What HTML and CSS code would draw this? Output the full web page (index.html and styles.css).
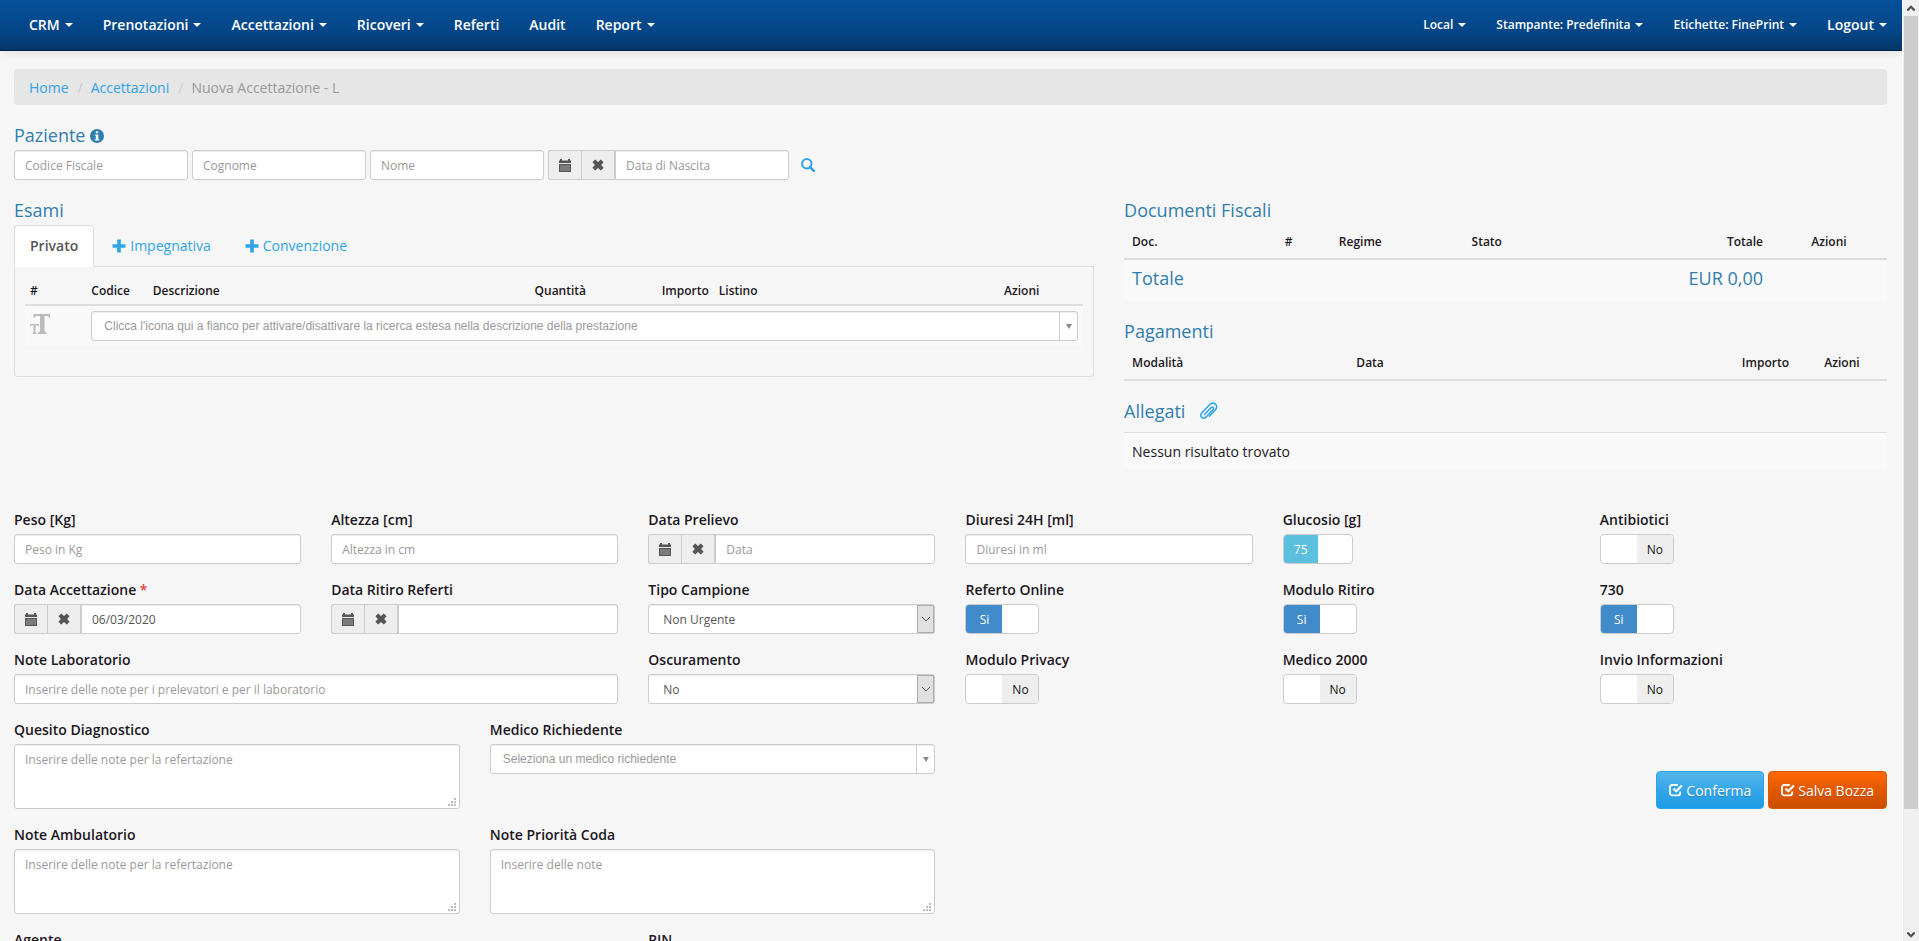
FILE: index.html
```html
<!DOCTYPE html>
<html lang="it">
<head>
<meta charset="utf-8">
<title>Nuova Accettazione</title>
<link rel="stylesheet" href="styles.css">
</head>
<body>
<svg class="sprite" aria-hidden="true">
  <symbol id="i-cal" viewBox="0 0 12 13"><path fill-rule="evenodd" d="M0 1.500h1V0h2v1.500h6V0h2v1.500h1V4H0zM0 5h12v8H0zM1.500 6.500v1h1v-1zm2 0v1h1v-1zm2 0v1h1v-1zm2 0v1h1v-1zm2 0v1h1v-1zm-8 2v1h1v-1zm2 0v1h1v-1zm2 0v1h1v-1zm2 0v1h1v-1zm2 0v1h1v-1zm-8 2v1h1v-1zm2 0v1h1v-1zm2 0v1h1v-1zm2 0v1h1v-1zm2 0v1h1v-1z"/></symbol>
  <symbol id="i-x" viewBox="0 0 12 12"><path d="M3.200.4 6 2.900 8.800.4l2.800 2.800L9.100 6l2.500 2.800-2.800 2.800L6 9.100l-2.800 2.500L.4 8.800 2.900 6 .4 3.200z"/></symbol>
  <symbol id="i-info" viewBox="0 0 14 14"><path fill-rule="evenodd" d="M7 0a7 7 0 1 1 0 14A7 7 0 0 1 7 0zM5.800 2.300v2h2.400v-2zM4.800 5.500v1h1v3.700h-1v1.200h4.500v-1.200h-1V5.500z"/></symbol>
  <symbol id="i-search" viewBox="0 0 14 14"><circle cx="5.800" cy="5.800" r="4.700" fill="none" stroke="currentColor" stroke-width="2"/><path d="M9 9l3.800 3.800" stroke="currentColor" stroke-width="2.600" stroke-linecap="round"/></symbol>
  <symbol id="i-plus" viewBox="0 0 14 14"><path d="M5.200.5h3.600v4.700h4.700v3.600H8.800v4.700H5.200V8.800H.5V5.200h4.700z"/></symbol>
  <symbol id="i-size" viewBox="0 0 20 20"><path d="M3.500 0H20v4h-.9c-.3-1.400-.8-2-2.200-2h-2.400v14.500c0 1.400.5 1.900 2 2V20H8v-1.500c1.500-.1 2-.6 2-2V2H7.300C5.500 2 4.700 2.600 4.400 4h-.9zM0 10h9v2.500h-.6c-.2-.9-.5-1.300-1.300-1.300H5.500v6.800c0 .8.300 1 1.200 1.100v.9H2.300v-.9c.9-.1 1.200-.3 1.200-1.100v-6.800H1.900c-.8 0-1.100.4-1.300 1.300H0z"/></symbol>
  <symbol id="i-clip" viewBox="0 0 20 18"><path d="M5.500 12.600 12 5.700c1.600-1.600 3.600.1 2.100 1.800l-6.900 7.400c-3 3-7.400-.3-4.500-3.800l7.900-8.400c3.900-3.800 9.600.6 5.900 5L10.300 14.300" fill="none" stroke="currentColor" stroke-width="1.500" stroke-linecap="round"/></symbol>
  <symbol id="i-check" viewBox="0 0 15 14"><path d="M9.500 1.700H3.400A2.400 2.400 0 0 0 1 4.100v6.200a2.400 2.400 0 0 0 2.400 2.400h6.200A2.400 2.400 0 0 0 12 10.300V8.500" fill="none" stroke="currentColor" stroke-width="2"/><path d="M4 6.200l1.700-1.700 2.100 2.100L13 1.300 14.700 3 7.800 9.900z"/></symbol>
  <symbol id="i-up" viewBox="0 0 9 6"><path d="M0 4.500 4.500 0 9 4.500V6H7L4.500 3.300 2 6H0z"/></symbol>
</svg>

<div class="app">
  <nav class="navbar">
    <div class="menu">
      <a href="#">CRM<i class="caret"></i></a>
      <a href="#">Prenotazioni<i class="caret"></i></a>
      <a href="#">Accettazioni<i class="caret"></i></a>
      <a href="#">Ricoveri<i class="caret"></i></a>
      <a href="#">Referti</a>
      <a href="#">Audit</a>
      <a href="#">Report<i class="caret"></i></a>
    </div>
    <div class="menu">
      <a href="#" class="small">Local<i class="caret"></i></a>
      <a href="#" class="small">Stampante: Predefinita<i class="caret"></i></a>
      <a href="#" class="small">Etichette: FinePrint<i class="caret"></i></a>
      <a href="#">Logout<i class="caret"></i></a>
    </div>
  </nav>

  <main class="page">
    <ol class="breadcrumb">
      <li><a href="#">Home</a></li>
      <li><a href="#">Accettazioni</a></li>
      <li>Nuova Accettazione - L</li>
    </ol>

    <section class="patient">
      <h4>Paziente <svg class="ic14"><use href="#i-info"/></svg></h4>
      <div class="patient-row">
        <input class="control" aria-label="Codice Fiscale" placeholder="Codice Fiscale">
        <input class="control" aria-label="Cognome" placeholder="Cognome">
        <input class="control" aria-label="Nome" placeholder="Nome">
        <div class="group">
          <button type="button" class="addon" aria-label="Calendario"><svg class="cal"><use href="#i-cal"/></svg></button>
          <button type="button" class="addon" aria-label="Cancella"><svg class="ic12"><use href="#i-x"/></svg></button>
          <input class="control" aria-label="Data di Nascita" placeholder="Data di Nascita">
        </div>
        <a href="#" class="search" aria-label="Cerca"><svg class="ic14"><use href="#i-search"/></svg></a>
      </div>
    </section>

    <div class="grid top">
      <section class="exams">
        <h4>Esami</h4>
        <div class="tabs">
          <a href="#" class="tab active">Privato</a>
          <a href="#" class="tab"><svg class="ic14"><use href="#i-plus"/></svg>Impegnativa</a>
          <a href="#" class="tab"><svg class="ic14"><use href="#i-plus"/></svg>Convenzione</a>
        </div>
        <div class="panel">
          <table class="table dense">
            <colgroup><col class="e-num"><col class="e-num"><col class="e-desc"><col class="e-qty"><col class="e-amount"><col class="e-list"><col></colgroup>
            <thead><tr><th>#</th><th>Codice</th><th>Descrizione</th><th class="right">Quantità</th><th class="right">Importo</th><th>Listino</th><th class="center">Azioni</th></tr></thead>
            <tbody><tr>
              <td><button type="button" class="size" aria-label="Ricerca estesa"><svg class="ic20"><use href="#i-size"/></svg></button></td>
              <td colspan="6"><div class="combo"><input aria-label="Prestazione" placeholder="Clicca l'icona qui a fianco per attivare/disattivare la ricerca estesa nella descrizione della prestazione"><button type="button" aria-label="Apri elenco"><i></i></button></div></td>
            </tr></tbody>
          </table>
        </div>
      </section>

      <section class="docs">
        <div class="block">
          <h4>Documenti Fiscali</h4>
          <table class="table">
            <colgroup><col class="d-doc"><col class="d-num"><col class="d-regime"><col class="d-doc"><col><col class="d-act"></colgroup>
            <thead><tr><th>Doc.</th><th>#</th><th>Regime</th><th>Stato</th><th class="right">Totale</th><th class="center">Azioni</th></tr></thead>
            <tbody><tr><td colspan="4"><h4>Totale</h4></td><td class="right"><h4>EUR 0,00</h4></td><td></td></tr></tbody>
          </table>
        </div>
        <div class="block">
          <h4>Pagamenti</h4>
          <table class="table">
            <colgroup><col class="p-mode"><col><col><col class="p-act"></colgroup>
            <thead><tr><th>Modalità</th><th>Data</th><th class="right">Importo</th><th class="center">Azioni</th></tr></thead>
          </table>
        </div>
        <div class="block">
          <h4 class="attach">Allegati <a href="#" aria-label="Allega file"><svg class="clip"><use href="#i-clip"/></svg></a></h4>
          <table class="table files"><tbody><tr><td>Nessun risultato trovato</td></tr></tbody></table>
        </div>
      </section>
    </div>

    <form class="grid">
      <div class="field"><label for="peso">Peso [Kg]</label><input id="peso" class="control" placeholder="Peso in Kg"></div>
      <div class="field"><label for="altezza">Altezza [cm]</label><input id="altezza" class="control" placeholder="Altezza in cm"></div>
      <div class="field"><label for="prelievo">Data Prelievo</label>
        <div class="group">
          <button type="button" class="addon" aria-label="Calendario"><svg class="cal"><use href="#i-cal"/></svg></button>
          <button type="button" class="addon" aria-label="Cancella"><svg class="ic12"><use href="#i-x"/></svg></button>
          <input id="prelievo" class="control" placeholder="Data">
        </div></div>
      <div class="field"><label for="diuresi">Diuresi 24H [ml]</label><input id="diuresi" class="control" placeholder="Diuresi in ml"></div>
      <div class="field"><label for="glucosio">Glucosio [g]</label><div class="switch info narrow"><input type="checkbox" id="glucosio" checked><span class="on">75</span><span class="off"></span></div></div>
      <div class="field"><label for="antib">Antibiotici</label><div class="switch"><input type="checkbox" id="antib"><span class="on"></span><span class="off">No</span></div></div>

      <div class="field"><label for="accett">Data Accettazione <span class="req">*</span></label>
        <div class="group">
          <button type="button" class="addon" aria-label="Calendario"><svg class="cal"><use href="#i-cal"/></svg></button>
          <button type="button" class="addon" aria-label="Cancella"><svg class="ic12"><use href="#i-x"/></svg></button>
          <input id="accett" class="control" value="06/03/2020">
        </div></div>
      <div class="field"><label for="ritiro">Data Ritiro Referti</label>
        <div class="group">
          <button type="button" class="addon" aria-label="Calendario"><svg class="cal"><use href="#i-cal"/></svg></button>
          <button type="button" class="addon" aria-label="Cancella"><svg class="ic12"><use href="#i-x"/></svg></button>
          <input id="ritiro" class="control">
        </div></div>
      <div class="field"><label for="tipo">Tipo Campione</label><div class="select"><select id="tipo" class="control"><option>Non Urgente</option></select><i><svg><path d="M1 1l4 4 4-4"/></svg></i></div></div>
      <div class="field"><label for="online">Referto Online</label><div class="switch"><input type="checkbox" id="online" checked><span class="on">Si</span><span class="off"></span></div></div>
      <div class="field"><label for="modritiro">Modulo Ritiro</label><div class="switch"><input type="checkbox" id="modritiro" checked><span class="on">Si</span><span class="off"></span></div></div>
      <div class="field"><label for="m730">730</label><div class="switch"><input type="checkbox" id="m730" checked><span class="on">Si</span><span class="off"></span></div></div>

      <div class="field span4"><label for="notelab">Note Laboratorio</label><input id="notelab" class="control" placeholder="Inserire delle note per i prelevatori e per il laboratorio"></div>
      <div class="field"><label for="oscur">Oscuramento</label><div class="select"><select id="oscur" class="control"><option>No</option></select><i><svg><path d="M1 1l4 4 4-4"/></svg></i></div></div>
      <div class="field"><label for="privacy">Modulo Privacy</label><div class="switch"><input type="checkbox" id="privacy"><span class="on"></span><span class="off">No</span></div></div>
      <div class="field"><label for="medico2000">Medico 2000</label><div class="switch"><input type="checkbox" id="medico2000"><span class="on"></span><span class="off">No</span></div></div>
      <div class="field"><label for="invio">Invio Informazioni</label><div class="switch"><input type="checkbox" id="invio"><span class="on"></span><span class="off">No</span></div></div>

      <div class="field span3"><label for="quesito">Quesito Diagnostico</label><div class="area"><textarea id="quesito" class="control" placeholder="Inserire delle note per la refertazione"></textarea></div></div>
      <div class="field span3"><label for="medico">Medico Richiedente</label><div class="combo"><input id="medico" placeholder="Seleziona un medico richiedente"><button type="button" aria-label="Apri elenco"><i></i></button></div></div>
      <div class="actions">
        <button type="submit" class="btn primary"><svg class="check"><use href="#i-check"/></svg>Conferma</button>
        <button type="button" class="btn warning"><svg class="check"><use href="#i-check"/></svg>Salva Bozza</button>
      </div>

      <div class="field span3"><label for="noteamb">Note Ambulatorio</label><div class="area"><textarea id="noteamb" class="control" placeholder="Inserire delle note per la refertazione"></textarea></div></div>
      <div class="field span3"><label for="notecoda">Note Priorità Coda</label><div class="area"><textarea id="notecoda" class="control" placeholder="Inserire delle note"></textarea></div></div>

      <div class="field row-start"><label for="agente">Agente</label><input id="agente" class="control"></div>
      <div class="field"><label for="pin">PIN</label><input id="pin" class="control"></div>
    </form>
  </main>
</div>

<div class="scrollbar" aria-hidden="true">
  <svg><use href="#i-up"/></svg>
  <div class="track"><div class="thumb"></div></div>
  <svg class="down"><use href="#i-up"/></svg>
</div>
</body>
</html>
```
FILE: styles.css
```css
* { box-sizing: border-box; }

body {
  margin: 0;
  height: 100vh;
  display: flex;
  overflow: hidden;
  background: #f6f6f6;
  color: #1c1722;
  font: 14px/20px "Open Sans", "Noto Sans", sans-serif;
}

a { color: #2fa4e7; text-decoration: none; }
svg { fill: currentColor; flex: none; }
button, input, select, textarea { font-family: inherit; margin: 0; }
.sprite { position: absolute; width: 0; height: 0; }
.ic12 { width: 12px; height: 12px; }
.ic14 { width: 14px; height: 14px; }
.ic20 { width: 20px; height: 20px; }
.cal { width: 12px; height: 13px; }

.app { flex: 1; min-width: 0; overflow: hidden; }

/* Top navigation */
.navbar {
  display: flex;
  justify-content: space-between;
  padding: 0 0 0 14px;
  background: linear-gradient(#04519b, #044687 60%, #033769);
  border-bottom: 1px solid #022241;
  box-shadow: 0 1px 10px rgba(0, 0, 0, .1);
}
.menu { display: flex; }
.menu a {
  display: flex;
  align-items: center;
  gap: 5px;
  padding: 15px;
  color: #fff;
  font-weight: 600;
}
.menu .small { font-size: 12px; }
.caret {
  border: 4px solid transparent;
  border-top-color: currentColor;
  border-bottom: 0;
}

.page { padding: 18px 15px 0 14px; }

.breadcrumb {
  display: flex;
  list-style: none;
  margin: 0 0 20px;
  padding: 9px 15px 7px;
  background: #e6e6e6;
  border-radius: 4px;
  color: #999;
}
.breadcrumb li + li::before { content: "/"; padding: 0 8px 0 9px; color: #ccc; }

h4 {
  margin: 0 0 5px;
  font-size: 18px;
  line-height: 20px;
  font-weight: 400;
  color: #317eac;
}

/* Form controls */
.control {
  display: block;
  width: 100%;
  height: 30px;
  padding: 5px 10px;
  font-size: 12px;
  line-height: 18px;
  color: #555;
  background: #fff;
  border: 1px solid #ccc;
  border-radius: 3px;
  box-shadow: inset 0 1px 1px rgba(0, 0, 0, .075);
}
::placeholder { color: #999; opacity: 1; }

.group { display: flex; }
.group .control { flex: 1; min-width: 0; border-radius: 0 3px 3px 0; }
.addon {
  width: 34px;
  height: 30px;
  padding: 0;
  display: flex;
  align-items: center;
  justify-content: center;
  background: #eee;
  border: 1px solid #ccc;
  color: #555;
}
.addon:first-child { width: 33px; border-right: 0; border-radius: 3px 0 0 3px; }

.patient { margin-bottom: 20px; }
.patient .ic14 { vertical-align: -1px; }
.patient-row { display: flex; align-items: center; gap: 4px; }
.patient-row .control { flex: none; width: 174px; }
.search { display: flex; margin-left: 8px; }

.grid {
  display: grid;
  grid-template-columns: repeat(12, minmax(0, 1fr));
  column-gap: 30px;
  align-items: start;
}
.top { margin-bottom: 40px; }
.exams { grid-column: span 7; }
.docs { grid-column: span 5; display: grid; gap: 20px; }

.tabs { display: flex; gap: 2px; border-bottom: 1px solid #ddd; }
.tab {
  display: flex;
  align-items: center;
  gap: 4px;
  padding: 10px 15px;
  margin-bottom: -1px;
  border: 1px solid transparent;
  border-radius: 4px 4px 0 0;
}
.tab.active {
  color: #555;
  font-weight: 600;
  background: #fff;
  border-color: #ddd #ddd #fff;
}
.panel {
  padding: 10px 10px 30px;
  border: 1px solid #ddd;
  border-top: 0;
  border-radius: 0 0 4px 4px;
}

.table { width: 100%; table-layout: fixed; border-collapse: separate; border-spacing: 0; }
.table th {
  padding: 8px;
  text-align: left;
  font-size: 12px;
  line-height: 17px;
  font-weight: 600;
  border-bottom: 2px solid #ddd;
}
.table td { padding: 8px; background: #f9f9f9; vertical-align: top; }
.table.dense th, .table.dense td { padding: 5px; }
.table .right { text-align: right; }
.table .center { text-align: center; }
.table.files td { padding: 9px 8px 7px; border-top: 1px solid #ddd; }
.e-num { width: 5.8%; }
.e-desc { width: 30.3%; }
.e-qty, .e-amount { width: 11.6%; }
.e-list { width: 23.3%; }
.d-doc { width: 20%; }
.d-num { width: 7.1%; }
.d-regime { width: 17.4%; }
.d-act { width: 15.2%; }
.p-mode { width: 29.4%; }
.p-act { width: 11.8%; }

.size { display: flex; margin-top: 3px; padding: 0; border: 0; background: none; color: #bbb; }
.attach { display: flex; align-items: center; gap: 14px; margin-bottom: 11px; }
.attach a { display: flex; }
.clip { width: 20px; height: 18px; }

.combo {
  display: flex;
  height: 30px;
  background: #fff;
  border: 1px solid #ccc;
  border-radius: 3px;
  box-shadow: inset 0 1px 1px rgba(0, 0, 0, .075);
}
.combo input {
  flex: 1;
  min-width: 0;
  padding: 1px 12px 0;
  border: 0;
  background: none;
  font: 12px/27px "Liberation Sans", Arial, sans-serif;
}
.combo button {
  width: 18px;
  padding: 0;
  display: flex;
  align-items: center;
  justify-content: center;
  border: 0;
  border-left: 1px solid #ccc;
  background: none;
}
.combo i { border: 3px solid transparent; border-top: 5px solid #888; border-bottom: 0; }

.field { grid-column: span 2; margin-bottom: 15px; }
.span3 { grid-column: span 3; }
.span4 { grid-column: span 4; }
.row-start { grid-column: 1 / span 4; }
.field label { display: block; padding-top: 1px; margin-bottom: 4px; font-weight: 600; }
.req { color: #e8403a; }

.select { position: relative; }
.select select { appearance: none; padding: 6px 14px 4px; }
.select i {
  position: absolute;
  top: 1px;
  right: 1px;
  bottom: 1px;
  width: 17px;
  display: flex;
  align-items: center;
  justify-content: center;
  background: #e1e1e1;
  border: 1px solid #adadad;
  pointer-events: none;
}
.select svg { width: 10px; height: 6px; fill: none; stroke: #555; }

.area { position: relative; }
.area textarea { height: 65px; padding-top: 6px; resize: none; }
.area::after {
  content: "";
  position: absolute;
  right: 4px;
  bottom: 3px;
  width: 8px;
  height: 8px;
  background:
    linear-gradient(#bbb, #bbb) 6px 0 / 2px 2px no-repeat,
    linear-gradient(#bbb, #bbb) 3px 3px / 2px 2px no-repeat,
    linear-gradient(#bbb, #bbb) 6px 3px / 2px 2px no-repeat,
    linear-gradient(#bbb, #bbb) 0 6px / 2px 2px no-repeat,
    linear-gradient(#bbb, #bbb) 3px 6px / 2px 2px no-repeat,
    linear-gradient(#bbb, #bbb) 6px 6px / 2px 2px no-repeat;
}

.switch {
  position: relative;
  display: flex;
  width: 74px;
  height: 30px;
  overflow: hidden;
  border: 1px solid #ccc;
  border-radius: 4px;
  background: #fff;
  font-size: 12px;
  line-height: 29px;
  text-align: center;
}
.switch.narrow { width: 70px; }
.switch input { position: absolute; inset: 0; width: 100%; height: 100%; margin: 0; opacity: 0; }
.switch span { flex: 1; }
.switch input:checked + .on { background: #428bca; color: #fff; }
.switch.info input:checked + .on { background: #5bc0de; }
.switch input:not(:checked) ~ .off { background: #eee; color: #111; }

.actions { grid-column: span 6; align-self: end; display: flex; justify-content: flex-end; gap: 4px; margin-bottom: 15px; }
.btn {
  display: flex;
  align-items: center;
  gap: 3px;
  height: 38px;
  padding: 0 12px;
  border: 1px solid;
  border-radius: 4px;
  color: #fff;
  font-size: 14px;
  text-shadow: 0 1px 1px rgba(0, 0, 0, .2);
}
.primary { background: linear-gradient(#54b4eb, #2fa4e7 60%, #1d9ce5); border-color: #2fa4e7; }
.warning { background: linear-gradient(#ff6707, #dd5600 60%, #c94e00); border-color: #dd5600; }
.check { width: 14px; height: 14px; }

/* Page scroll indicator */
.scrollbar {
  flex: none;
  width: 17px;
  padding: 5px 1px 3px;
  display: flex;
  flex-direction: column;
  align-items: center;
  gap: 5px;
  background: #f0f0f0;
  border-left: 1px solid #fff;
  color: #505050;
}
.scrollbar svg { width: 8px; height: 6px; }
.down { transform: rotate(180deg); }
.track { flex: 1; align-self: stretch; }
.thumb { height: 87%; background: #cdcdcd; }
```
